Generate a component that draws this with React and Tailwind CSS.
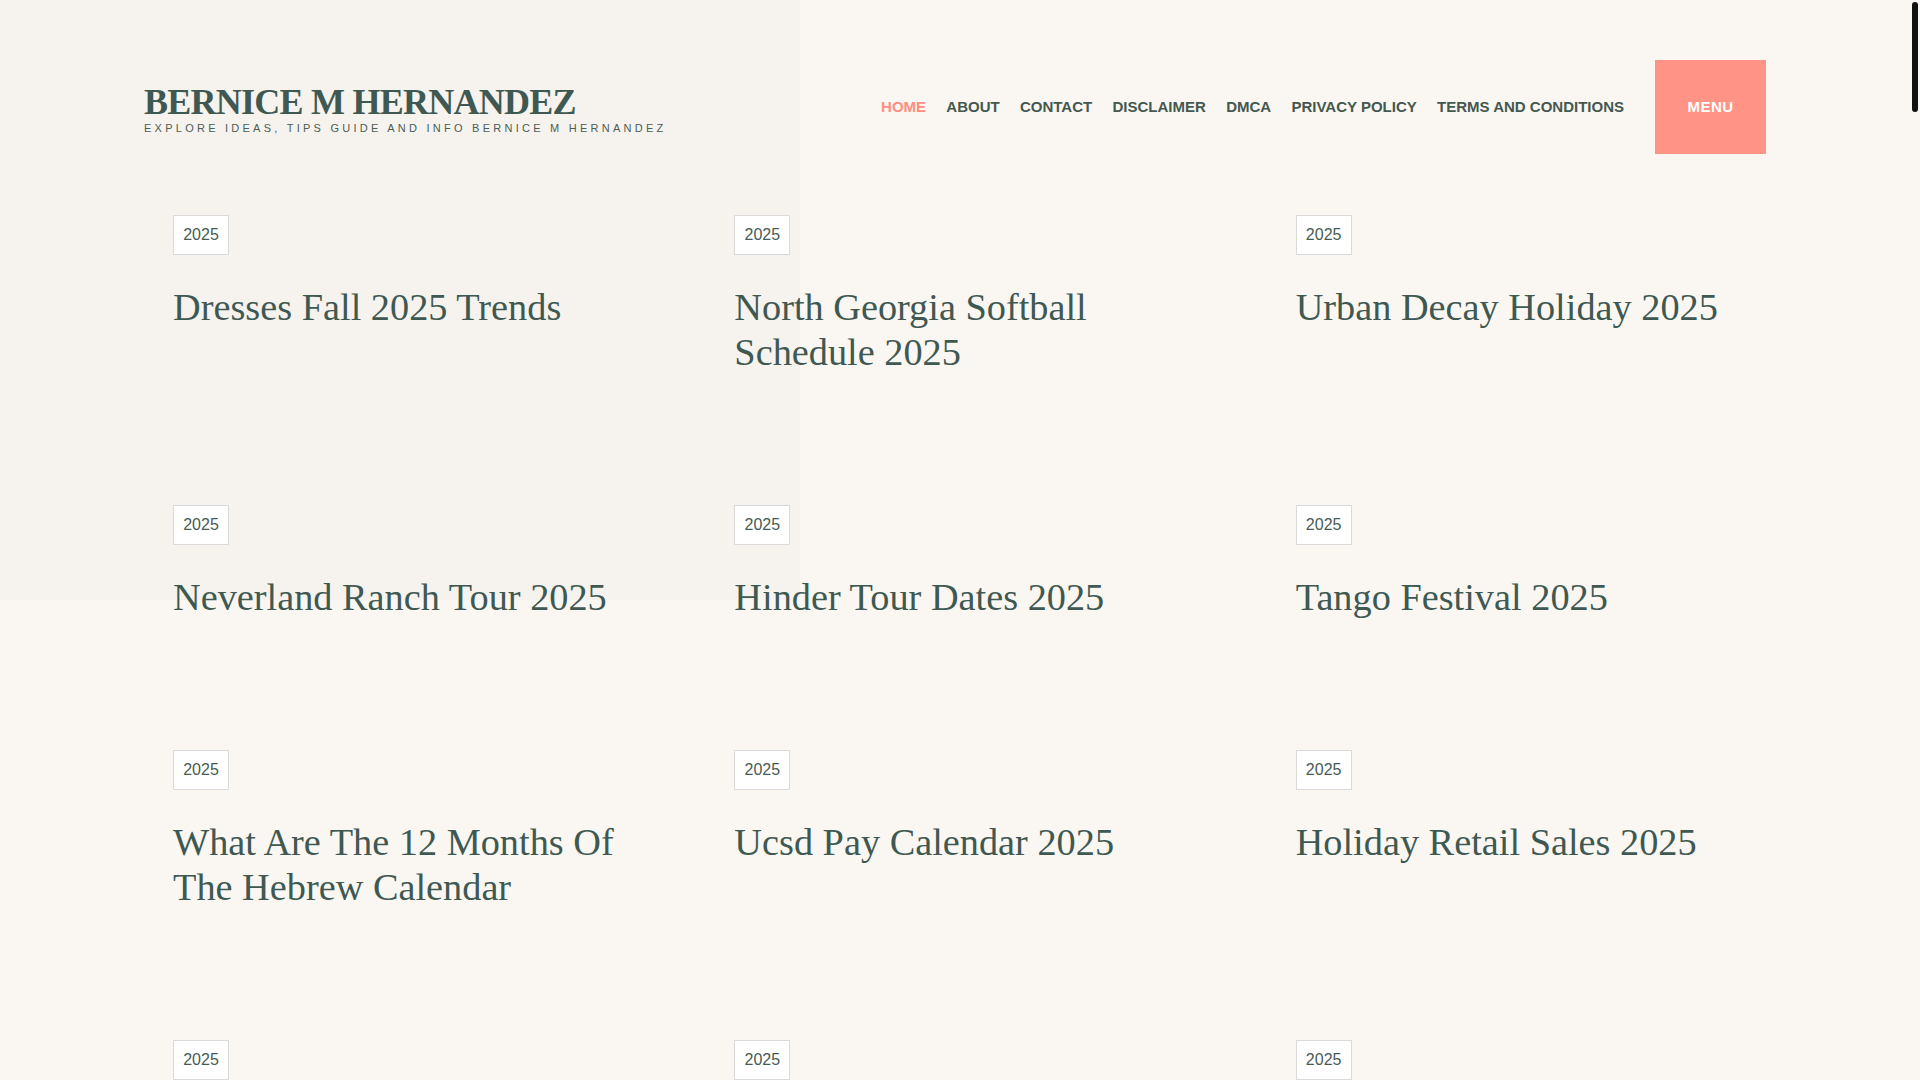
import React from 'react';

const navLinks = ['Home', 'About', 'Contact', 'Disclaimer', 'DMCA', 'Privacy Policy', 'Terms and Conditions'];

const posts = [
  'Dresses Fall 2025 Trends',
  'North Georgia Softball Schedule 2025',
  'Urban Decay Holiday 2025',
  'Neverland Ranch Tour 2025',
  'Hinder Tour Dates 2025',
  'Tango Festival 2025',
  'What Are The 12 Months Of The Hebrew Calendar',
  'Ucsd Pay Calendar 2025',
  'Holiday Retail Sales 2025',
  'Spring Break Dates 2025',
  'Easter Sunday 2025 Date',
  'Fall Fashion Colors 2025',
].map((title, i) => ({ id: i, year: '2025', title }));

function PostCard({ post }) {
  return (
    <article className="pl-[29px]">
      <a
        href="#"
        className="flex h-[40px] w-[56px] items-center justify-center border border-[#dadada] bg-white font-['Liberation_Sans',Arial,sans-serif] text-[16px] text-[#475b54]"
      >
        {post.year}
      </a>
      <h2 className="mt-[30px] font-['Liberation_Serif','Times_New_Roman',serif] text-[38.3px] leading-[45px] font-normal text-[#3f5952]">
        <a href="#">{post.title}</a>
      </h2>
    </article>
  );
}

export default function App() {
  return (
    <div className="relative min-h-screen overflow-hidden bg-[#faf7f2]">
      {/* faint hero block behind the header */}
      <div className="absolute top-0 left-0 h-[600px] w-[800px] bg-[#f6f2ed]" />

      <div className="relative ml-[144px] w-[1622px] pb-[120px]">
        {/* Header */}
        <header className="flex items-center justify-between pt-[60px]">
          <div className="mt-[5px]">
            <h1 className="font-['Liberation_Serif','Times_New_Roman',serif] text-[36px] leading-[36px] font-bold tracking-[-0.75px] text-[#3f5952]">
              <a href="#">BERNICE M HERNANDEZ</a>
            </h1>
            <p className="font-['Liberation_Sans',Arial,sans-serif] text-[11px] leading-[16px] tracking-[3.25px] text-[#4b5e57] uppercase">
              Explore Ideas, Tips Guide and Info Bernice M Hernandez
            </p>
          </div>

          <div className="flex items-center">
            <nav className="flex items-center gap-[20.3px] font-['Liberation_Sans',Arial,sans-serif] text-[15px] font-bold text-[#44584f] uppercase">
              {navLinks.map((link, index) => (
                <a key={link} href="#" className={index === 0 ? 'text-[#ff8f80]' : ''}>
                  {link}
                </a>
              ))}
            </nav>
            <button className="ml-[31px] flex h-[94px] w-[111px] items-center justify-center bg-[#ff9486] font-['Liberation_Sans',Arial,sans-serif] text-[15px] font-bold tracking-[0.5px] text-white">
              MENU
            </button>
          </div>
        </header>

        {/* Posts */}
        <main className="mt-[61px] grid grid-cols-3 gap-x-[62px] gap-y-[130px]">
          {posts.map((post) => (
            <PostCard key={post.id} post={post} />
          ))}
        </main>
      </div>

      {/* window scrollbar */}
      <div className="fixed top-0 right-0 h-screen w-[10px] bg-[#faf7f2]">
        <div className="mx-auto mt-[2px] h-[110px] w-[6px] rounded-full bg-[#111111]" />
      </div>
    </div>
  );
}
